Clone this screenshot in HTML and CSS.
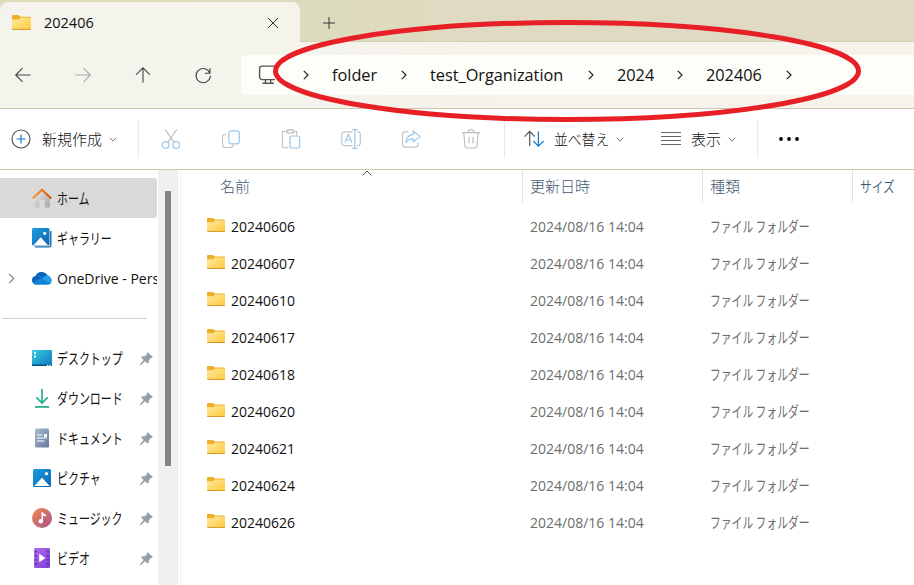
FILE: index.html
```html
<!DOCTYPE html>
<html lang="ja">
<head>
  <meta charset="UTF-8">
  <meta name="viewport" content="width=device-width, initial-scale=1.0">
  <title>202406</title>
  <link rel="stylesheet" href="styles.css">
</head>
<body>
  <svg class="sprite" aria-hidden="true">
    <defs>
      <linearGradient id="g-folder" x1="0" y1="0" x2="1" y2="1"><stop offset="0" stop-color="#ffe9a3"/><stop offset="1" stop-color="#fec938"/></linearGradient>
      <linearGradient id="g-blue" x1="0" y1="0" x2="1" y2="1"><stop offset="0" stop-color="#1b9de2"/><stop offset="1" stop-color="#0f63ad"/></linearGradient>
      <linearGradient id="g-desk" x1="0" y1="0" x2="1" y2="1"><stop offset="0" stop-color="#35d0dc"/><stop offset="1" stop-color="#1272c4"/></linearGradient>
      <linearGradient id="g-home" x1="0" y1="0" x2="1" y2="1"><stop offset="0" stop-color="#ededed"/><stop offset="1" stop-color="#a6a6a6"/></linearGradient>
      <linearGradient id="g-roof" x1="0" y1="0" x2="1" y2="0"><stop offset="0" stop-color="#f29a38"/><stop offset="1" stop-color="#cf5513"/></linearGradient>
      <linearGradient id="g-down" x1="0" y1="0" x2="0" y2="1"><stop offset="0" stop-color="#36c1a0"/><stop offset="1" stop-color="#128a72"/></linearGradient>
      <linearGradient id="g-doc" x1="0" y1="0" x2="1" y2="1"><stop offset="0" stop-color="#a9bad0"/><stop offset="1" stop-color="#64799c"/></linearGradient>
      <linearGradient id="g-music" x1="0" y1="0" x2="1" y2="1"><stop offset="0" stop-color="#f28a50"/><stop offset="1" stop-color="#a8508c"/></linearGradient>
      <linearGradient id="g-video" x1="0" y1="0" x2="1" y2="1"><stop offset="0" stop-color="#b16ceb"/><stop offset="1" stop-color="#7b3cd6"/></linearGradient>
    </defs>
    <symbol id="folder" viewBox="0 0 18 14">
      <path d="M0 1Q0 0 1 0H6L8 1.5H17Q18 1.5 18 2.5V5H0Z" fill="#eeb02b"/>
      <path d="M0 4.2H6.4L8 2.6H18V13Q18 14 17 14H1Q0 14 0 13Z" fill="url(#g-folder)"/>
      <path d="M.3 13.5H17.7" stroke="#d99a2b"/>
    </symbol>
    <symbol id="chev" viewBox="0 0 6 10"><path d="M.8.8 5 5 .8 9.2" fill="none" stroke="currentColor" stroke-width="1.2"/></symbol>
    <symbol id="down" viewBox="0 0 8 5"><path d="M.7.7 4 4 7.3.7" fill="none" stroke="#777"/></symbol>
    <symbol id="pin" viewBox="0 0 13 13">
      <path d="M7.5.2 12.8 4.8 11.9 6 10.6 6.1 8.9 8.4 8.7 11 7.6 11.6 4.9 9.2 1 12.9 0 13 .2 12 3.6 8 1.2 5.5 1.9 4.3 4.8 4.2 6.8 2.4 6.7 1Z" fill="#95a0a8"/>
    </symbol>
  </svg>

  <div class="window">
    <header class="tabs">
      <div class="tab">
        <svg class="folder"><use href="#folder"/></svg>
        <span class="tab-title">202406</span>
        <svg class="close" viewBox="0 0 12 12"><path d="M.8.8 11.2 11.2M11.2.8.8 11.2"/></svg>
      </div>
      <svg class="plus" viewBox="0 0 12 12"><path d="M6 0V12M0 6H12"/></svg>
    </header>

    <nav class="nav">
      <div class="nav-buttons">
        <svg viewBox="0 0 20 20"><path d="M17.5 10H3M9.5 3.2 2.7 10 9.5 16.8"/></svg>
        <svg class="off" viewBox="0 0 20 20"><path d="M2.5 10H17M10.5 3.2 17.3 10 10.5 16.8"/></svg>
        <svg viewBox="0 0 20 20"><path d="M10 17.5V3M3.2 9.7 10 2.9 16.8 9.7"/></svg>
        <svg viewBox="0 0 20 20"><path d="M16.9 8.3A7.1 7.1 0 1 0 17.3 10.8M17 3V8.2H11.8"/></svg>
      </div>
      <div class="address">
        <svg class="pc" viewBox="0 0 20 20"><path d="M17 1.1H4.1A2.5 2.5 0 0 0 1.6 3.6V12A2.5 2.5 0 0 0 4.1 14.6H17M7.5 14.6V18M12.7 14.6V18M4.5 18.2H16"/></svg>
        <svg class="chev"><use href="#chev"/></svg>
        <span class="crumb folder-crumb">folder</span>
        <svg class="chev"><use href="#chev"/></svg>
        <span class="crumb org-crumb">test_Organization</span>
        <svg class="chev"><use href="#chev"/></svg>
        <span class="crumb year-crumb">2024</span>
        <svg class="chev"><use href="#chev"/></svg>
        <span class="crumb month-crumb">202406</span>
        <svg class="chev"><use href="#chev"/></svg>
      </div>
    </nav>

    <div class="toolbar">
      <div class="group new">
        <svg class="tool" viewBox="0 0 20 20"><circle cx="10" cy="10" r="9" stroke="#555"/><path d="M10 5.5V14.5M5.5 10H14.5" stroke="#1479c9"/></svg>
        <span>新規作成</span>
        <svg class="down"><use href="#down"/></svg>
      </div>
      <div class="group actions">
        <svg class="tool" viewBox="0 0 20 20"><path d="M4.2.5 13 13.2M15.8.5 7 13.2" stroke="#bdbdbd"/><circle cx="4.6" cy="16" r="3.3" stroke="#9cc8ea"/><circle cx="15.2" cy="16" r="3.3" stroke="#9cc8ea"/></svg>
        <svg class="tool" viewBox="0 0 20 20"><path d="M5.5 5.5H4A2.5 2.5 0 0 0 1.5 8V15.5A3 3 0 0 0 4.5 18.5H9.5A2.5 2.5 0 0 0 12 16" stroke="#c4c4c4"/><rect x="7.8" y="1.8" width="10.5" height="13" rx="2.5" stroke="#9cc8ea"/></svg>
        <svg class="tool" viewBox="0 0 20 20"><path d="M6 2.5H1.5V17.5Q1.5 18.7 3 18.7H7.5M13 2.5H15.7V6" stroke="#c4c4c4"/><rect x="5.7" y=".8" width="7" height="3.2" rx="1.6" stroke="#b5b5b5"/><rect x="9" y="7" width="9.7" height="12" rx="1.6" stroke="#9cc8ea"/></svg>
        <svg class="tool" viewBox="0 0 20 20"><path d="M11.5 2.8H3.5A2.7 2.7 0 0 0 .8 5.5V14A2.7 2.7 0 0 0 3.5 16.7H11.5M16 2.8H17A2.5 2.5 0 0 1 19.3 5.5V14A2.5 2.5 0 0 1 17 16.7H16" stroke="#c4c4c4"/><path d="M4 13.5 7.5 5.5 11 13.5M5.2 11H9.8M13.8.8V19M11.2.6H16.4M11.2 19.3H16.4" stroke="#9cc8ea"/></svg>
        <svg class="tool" viewBox="0 0 20 20"><path d="M7.5 2.8H4A2.5 2.5 0 0 0 1.5 5.3V15.5A2.7 2.7 0 0 0 4.2 18.2H14.3A2.7 2.7 0 0 0 17 15.5V13.5" stroke="#c4c4c4"/><path d="M12.3 2.2 19 7.5 12.3 12.8V9.8Q7.5 9.6 4.8 13.5 5.8 6.2 12.3 5.4Z" stroke="#9cc8ea"/></svg>
        <svg class="tool" viewBox="0 0 20 20"><path d="M1 3.7H19M7 3.5A3 2.8 0 0 1 13 3.5M2.8 3.8 4 17Q4.2 19 6 19H14Q15.8 19 16 17L17.2 3.8M8 8V14.5M12 8V14.5" stroke="#bdbdbd"/></svg>
      </div>
      <div class="group views">
        <svg class="tool sort" viewBox="0 0 20 20"><path d="M5.7 17V2.5M.5 7.7 5.7 2.4 10.8 7.7" stroke="#555"/><path d="M14.4 2.5V17M9.3 12 14.4 17.2 19.6 12" stroke="#1479c9"/></svg>
        <span class="sort-label"><span class="squeeze">並べ替え</span></span>
        <svg class="down"><use href="#down"/></svg>
        <svg class="tool list" viewBox="0 0 20 20"><path d="M0 3.5H20M0 7.5H20M0 11.5H20M0 15.5H20" stroke="#666"/></svg>
        <span>表示</span>
        <svg class="down"><use href="#down"/></svg>
      </div>
      <svg class="more" viewBox="0 0 20 4"><circle cx="2" cy="2" r="1.9"/><circle cx="10" cy="2" r="1.9"/><circle cx="18" cy="2" r="1.9"/></svg>
    </div>

    <div class="content">
      <aside class="sidebar">
        <div class="place active">
          <svg viewBox="0 0 20 20"><path d="M2 9.5 10 2 18 9.5V18Q18 19.6 16.5 19.6H12.8V12H7.3V19.6H3.5Q2 19.6 2 18Z" fill="url(#g-home)"/><path d="M.8 10.5 10 1.8 19.2 10.5" fill="none" stroke="url(#g-roof)" stroke-width="2.2" stroke-linejoin="round"/></svg>
          <span class="kana">ホーム</span>
        </div>
        <div class="place">
          <svg viewBox="0 0 20 20"><path d="M18.8 3V17.5Q18.8 18.9 17.3 18.9H3" fill="none" stroke="#1768ae" stroke-width="1.4"/><rect width="17.5" height="17.5" rx="1.5" fill="url(#g-blue)"/><path d="M1.5 17.3 8.7 9.3 16 17.3Z" fill="#fff"/><circle cx="12.7" cy="5.3" r="1.6" fill="#fff"/></svg>
          <span class="kana">ギャラリー</span>
        </div>
        <div class="place cloud">
          <svg class="expand"><use href="#chev"/></svg>
          <svg viewBox="0 0 20 20"><path d="M4 16.5A4.3 4.3 0 0 1 3.5 8 6.7 6.7 0 0 1 15.6 7.5L8 16Z" fill="#0b63bd"/><path d="M5 8.2Q8 6.5 10.5 9L19 12.5A4.8 4.8 0 0 0 15.5 7.4Q13 7.4 11.5 9L5 8.2" fill="#1685d9"/><path d="M1.2 14.7 11.5 9.2Q15 6 18.2 9 21.5 12.5 18.5 15.4 17.5 16.5 15.8 16.5H4.3Q2.2 16.5 1.2 14.7Z" fill="#28a0e9"/><path d="M6 8.3 18.8 15.2Q17.5 16.5 15.8 16.5H4.3Q2.2 16.5 1.2 14.7L9 10.3Z" fill="#1484d7"/></svg>
          <span class="latin">OneDrive - Pers</span>
        </div>
        <hr>
        <div class="place">
          <svg viewBox="0 0 20 20"><rect y="2" width="20" height="16" rx="1" fill="url(#g-desk)"/><path d="M0 17.2H20" stroke="#075385" stroke-width="1.5"/><path d="M2 4H4V6H2ZM2 7.5H4V9.5H2ZM15 16.7H16.3V18H15ZM17.3 16.7H18.6V18H17.3Z" fill="#fff"/></svg>
          <span class="kana">デスクトップ</span>
          <svg class="pin"><use href="#pin"/></svg>
        </div>
        <div class="place">
          <svg viewBox="0 0 20 20"><path d="M10 1V14.5M4.3 9.3 10 15 15.7 9.3" fill="none" stroke="#27ad91" stroke-width="1.7"/><rect x="3" y="18" width="14" height="1.7" fill="url(#g-down)"/></svg>
          <span class="kana">ダウンロード</span>
          <svg class="pin"><use href="#pin"/></svg>
        </div>
        <div class="place">
          <svg viewBox="0 0 20 20"><rect x="3" y=".5" width="14" height="19" rx="1.3" fill="url(#g-doc)"/><path d="M5 7H10.5M5 10H15M5 13H12.5" stroke="#fff" stroke-width="1.2"/><rect x="12" y="6" width="3" height="3" fill="#fff"/></svg>
          <span class="kana">ドキュメント</span>
          <svg class="pin"><use href="#pin"/></svg>
        </div>
        <div class="place">
          <svg viewBox="0 0 20 20"><rect x="1" y="1" width="18" height="18" rx="1.5" fill="url(#g-blue)"/><path d="M2.3 18 10 9.7 17.7 18Z" fill="#fff"/><circle cx="14.5" cy="5.7" r="1.6" fill="#fff"/></svg>
          <span class="kana">ピクチャ</span>
          <svg class="pin"><use href="#pin"/></svg>
        </div>
        <div class="place">
          <svg viewBox="0 0 20 20"><circle cx="10" cy="10" r="10" fill="url(#g-music)"/><circle cx="8.8" cy="13.2" r="2.2" fill="#fff"/><path d="M9.5 4.3H11Q11.5 6 14 6.7V8.3Q12 8.2 11 7.2V13.3H9.5Z" fill="#fff"/></svg>
          <span class="kana">ミュージック</span>
          <svg class="pin"><use href="#pin"/></svg>
        </div>
        <div class="place">
          <svg viewBox="0 0 20 20"><rect x="2" y="0" width="16" height="20" rx="1.2" fill="url(#g-video)"/><path d="M4 3V19M16 3V19" stroke="#4a2496" stroke-width="1.5" stroke-dasharray="1.6 2.4"/><path d="M7.2 5.8 13.5 10 7.2 14.2Z" fill="#fff"/></svg>
          <span class="kana">ビデオ</span>
          <svg class="pin"><use href="#pin"/></svg>
        </div>
      </aside>
      <div class="scrollbar"><div class="thumb"></div></div>

      <main class="files">
        <div class="columns">
          <div>名前<svg class="sorted" viewBox="0 0 10 6"><path d="M.6 5.4 5 1 9.4 5.4"/></svg></div>
          <div>更新日時</div>
          <div>種類</div>
          <div><span class="kana">サイズ</span></div>
        </div>
        <div class="row"><svg class="folder"><use href="#folder"/></svg><span class="name">20240606</span><span>2024/08/16 14:04</span><span class="kana">ファイル フォルダー</span></div>
        <div class="row"><svg class="folder"><use href="#folder"/></svg><span class="name">20240607</span><span>2024/08/16 14:04</span><span class="kana">ファイル フォルダー</span></div>
        <div class="row"><svg class="folder"><use href="#folder"/></svg><span class="name">20240610</span><span>2024/08/16 14:04</span><span class="kana">ファイル フォルダー</span></div>
        <div class="row"><svg class="folder"><use href="#folder"/></svg><span class="name">20240617</span><span>2024/08/16 14:04</span><span class="kana">ファイル フォルダー</span></div>
        <div class="row"><svg class="folder"><use href="#folder"/></svg><span class="name">20240618</span><span>2024/08/16 14:04</span><span class="kana">ファイル フォルダー</span></div>
        <div class="row"><svg class="folder"><use href="#folder"/></svg><span class="name">20240620</span><span>2024/08/16 14:04</span><span class="kana">ファイル フォルダー</span></div>
        <div class="row"><svg class="folder"><use href="#folder"/></svg><span class="name">20240621</span><span>2024/08/16 14:04</span><span class="kana">ファイル フォルダー</span></div>
        <div class="row"><svg class="folder"><use href="#folder"/></svg><span class="name">20240624</span><span>2024/08/16 14:04</span><span class="kana">ファイル フォルダー</span></div>
        <div class="row"><svg class="folder"><use href="#folder"/></svg><span class="name">20240626</span><span>2024/08/16 14:04</span><span class="kana">ファイル フォルダー</span></div>
      </main>
    </div>

    <svg class="marker" viewBox="0 0 590 104"><ellipse cx="295" cy="52" rx="291.5" ry="48.5"/></svg>
  </div>
</body>
</html>
```
FILE: styles.css
```css
* {
  box-sizing: border-box;
}
body {
  margin: 0;
  font: 14px/20px "Open Sans", "Noto Sans", "Noto Sans CJK JP", sans-serif;
  color: #111;
}
svg {
  display: block;
  flex: none;
}
.sprite {
  position: absolute;
  width: 0;
  height: 0;
}
.window {
  position: relative;
  width: 914px;
  height: 585px;
  overflow: hidden;
  background: #fff;
}
.folder {
  width: 18px;
  height: 14px;
}

/* Tabs */

.tabs {
  display: flex;
  height: 42px;
  padding-top: 2px;
  background: linear-gradient(90deg, #dcdebb 0, #dddbbd 330px, #e0dac2 480px);
  border-bottom: 1px solid #d5d0b8;
}
.tab {
  display: flex;
  align-items: center;
  width: 300px;
  height: 41px;
  padding: 0 21px 0 12px;
  background: #f4f4ec;
  border-radius: 8px 8px 0 0;
}
.tab .folder {
  width: 19px;
  height: 15px;
}
.tab-title {
  flex: 1;
  margin-left: 13px;
  font-size: 14.5px;
  font-weight: 500;
}
.close, .plus {
  width: 12px;
  height: 12px;
  fill: none;
  stroke: #333;
}
.plus {
  margin: 15px 0 0 23px;
}

/* Navigation */

.nav {
  display: flex;
  align-items: center;
  height: 67px;
  background: linear-gradient(90deg, #f4f4ec 0, #f4f3ec 300px, #f6f2ec 500px);
  border-bottom: 1px solid #c9c8ae;
}
.nav-buttons {
  display: flex;
  gap: 40px;
  width: 241px;
  padding-left: 13px;
}
.nav-buttons svg {
  width: 20px;
  height: 20px;
  fill: none;
  stroke: #444;
  stroke-width: 1.1;
}
.nav-buttons .off {
  stroke: #aaa;
}
.address {
  display: flex;
  flex: 1;
  align-items: center;
  height: 40px;
  padding-left: 17px;
  background: #fdfdf9;
  border-radius: 5px 0 0 5px;
}
.pc {
  width: 20px;
  height: 20px;
  margin: -1px 25px 0 0;
  fill: none;
  stroke: #555;
  stroke-width: 1.4;
}
.chev {
  width: 6px;
  height: 10px;
  color: #222;
}
.crumb {
  margin-left: 23px;
  font-size: 16.3px;
  white-space: nowrap;
}
.folder-crumb {
  width: 69px;
}
.org-crumb {
  width: 158px;
}
.year-crumb {
  width: 60px;
}
.month-crumb {
  width: 80px;
}

/* Command bar */

.toolbar {
  display: flex;
  align-items: center;
  height: 61px;
  font: 300 15px/20px "Noto Sans CJK JP", sans-serif;
  border-bottom: 1px solid #c9c8ae;
}
.group {
  display: flex;
  align-items: center;
  height: 38px;
  border-right: 1px solid #e8e8e8;
}
.tool {
  width: 20px;
  height: 20px;
  fill: none;
  stroke-width: 1.2;
}
.down {
  width: 8px;
  height: 5px;
  margin-left: 7px;
}
.new {
  width: 139px;
  padding-left: 11px;
}
.new span {
  margin-left: 11px;
}
.actions {
  gap: 40px;
  width: 366px;
  padding-left: 22px;
}
.views {
  width: 253px;
  padding-left: 19px;
}
.sort-label {
  width: 55px;
  margin-left: 10px;
  white-space: nowrap;
}
.squeeze {
  display: inline-block;
  transform: scaleX(.92);
  transform-origin: 0 50%;
}
.list {
  margin: 0 10px 0 37px;
}
.more {
  width: 20px;
  height: 4px;
  margin-left: 21px;
}

/* Sidebar */

.content {
  display: flex;
  height: 415px;
}
.sidebar {
  width: 158px;
  padding: 8px 1px 0 0;
}
.place {
  display: flex;
  align-items: center;
  height: 40px;
  padding-left: 32px;
  overflow: hidden;
  white-space: nowrap;
}
.place > svg {
  width: 20px;
  height: 20px;
}
.place > span {
  width: 83px;
  margin-left: 5px;
}
.active {
  background: #d9d9d9;
  border-radius: 0 3px 3px 0;
}
.cloud {
  padding-left: 8px;
}
.place > .expand {
  width: 7px;
  height: 11px;
  margin-right: 17px;
  color: #888;
}
.place > .pin {
  width: 13px;
  height: 13px;
}
.place > .latin {
  width: 100px;
  padding-top: 1px;
  font-size: 14px;
}
/* condensed kana, as in a UI font */
.kana {
  display: inline-block;
  flex: none;
  font: 400 15px/20px "Noto Sans CJK JP", sans-serif;
  white-space: nowrap;
  transform: scaleX(.73);
  transform-origin: 0 50%;
}
.place > .kana {
  width: 83px;
}
hr {
  width: 145px;
  height: 1px;
  margin: 20px 0 19px 2px;
  background: #d0d0d0;
  border: 0;
}
.scrollbar {
  width: 20px;
  padding: 21px 7px 0;
  background: #f0f0f0;
}
.thumb {
  height: 275px;
  background: #858585;
}

/* File list */

.files {
  flex: 1;
  margin-left: 2px;
  border-left: 1px solid #f2f2f2;
}
.columns {
  display: grid;
  grid-template-columns: 342px 180px 150px 1fr;
  height: 38px;
  font: 300 15px/31px "Noto Sans CJK JP", sans-serif;
  color: #3f566f;
}
.columns div {
  position: relative;
  height: 33px;
  padding-left: 7px;
  border-right: 1px solid #e3e3e3;
}
.columns div:first-child {
  padding-left: 39px;
}
.columns div:last-child {
  border: 0;
}
.columns .kana {
  font-weight: 350;
  transform: scaleX(.78);
}
.sorted {
  position: absolute;
  top: 0;
  left: 181px;
  width: 10px;
  height: 6px;
  fill: none;
  stroke: #555;
}
.row {
  display: flex;
  align-items: center;
  height: 37px;
  padding-left: 26px;
  color: #6d6d6d;
}
.row .folder {
  margin-top: -3px;
}
.name {
  width: 299px;
  margin-left: 6px;
  color: #111;
}
.row .name + span {
  width: 180px;
}
.row .kana {
  margin-top: -2px;
  transform: scaleX(.72);
}

/* Hand-drawn circle round the path */

.marker {
  position: absolute;
  top: 19px;
  left: 271.5px;
  width: 590px;
  height: 104px;
  fill: none;
  stroke: #e71f26;
  stroke-width: 5;
}
```
